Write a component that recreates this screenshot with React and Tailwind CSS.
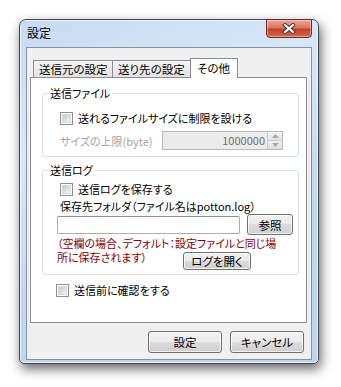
const jp = "font-['Noto_Sans_CJK_JP','Noto_Sans',sans-serif] [font-feature-settings:'palt']";

function CheckBox() {
    return (
        <span className="block w-[13px] h-[13px] shrink-0 border border-[#8e8f8f] bg-white p-px">
            <span className="block w-full h-full border border-[#d8d8d8] bg-gradient-to-br from-[#c4c8ce] to-[#f7f7f7]" />
        </span>
    );
}

function Button({ children, className = "" }) {
    return (
        <button
            className={`flex items-center justify-center border border-[#707070] rounded-[3px] bg-[linear-gradient(#f2f2f2_0%,#ebebeb_50%,#dddddd_50%,#cfcfcf_100%)] shadow-[inset_0_0_0_1px_rgba(255,255,255,0.7)] text-[11.5px] leading-[14px] text-black ${className}`}
        >
            {children}
        </button>
    );
}

function CloseButton() {
    return (
        <div className="w-[46px] h-[19px] mr-[6px] -mt-px flex items-center justify-center rounded-b-[4px] border border-[#6b2a22] bg-[linear-gradient(#e9a99a_0%,#d9755f_45%,#c2402a_55%,#cf6a4c_100%)] shadow-[inset_0_0_0_1px_rgba(255,220,210,0.5)]">
            <svg width="14" height="11" viewBox="0 0 14 11">
                <path d="M3 2 L11 9 M11 2 L3 9" stroke="#3b3b3b" strokeWidth="4" strokeLinecap="square" />
                <path d="M3 2 L11 9 M11 2 L3 9" stroke="#ffffff" strokeWidth="2" strokeLinecap="square" />
            </svg>
        </div>
    );
}

function Spinner() {
    return (
        <div className="flex flex-col w-[15px] h-full border-l border-[#c9c9c9]">
            <div className="flex-1 flex items-center justify-center border-b border-[#c9c9c9] bg-gradient-to-b from-[#f4f4f4] to-[#e2e2e2]">
                <svg width="7" height="4" viewBox="0 0 7 4"><path d="M0 4 L3.5 0 L7 4 Z" fill="#a8a8a8" /></svg>
            </div>
            <div className="flex-1 flex items-center justify-center bg-gradient-to-b from-[#f0f0f0] to-[#dedede]">
                <svg width="7" height="4" viewBox="0 0 7 4"><path d="M0 0 L3.5 4 L7 0 Z" fill="#a8a8a8" /></svg>
            </div>
        </div>
    );
}

export default function App() {
    return (
        <div className={`w-[341px] h-[387px] bg-white pt-[19px] pl-[19px] ${jp}`}>
            <div className="w-[300px] h-[345px] flex flex-col border border-[#3e4852] rounded-t-[7px] rounded-b-[5px] bg-[linear-gradient(160deg,#c6dbf2_0%,#d9e8f8_30%,#c3d9f1_60%,#bcd4ee_100%)] shadow-[2px_5px_12px_rgba(0,0,0,0.6),inset_0_0_0_1px_rgba(255,255,255,0.65)]">
                {/* title bar */}
                <div className="h-[27px] flex justify-between items-start">
                    <span className="pl-[7px] pt-[6px] text-[12px] leading-[14px] text-black">設定</span>
                    <CloseButton />
                </div>

                {/* client area */}
                <div className="mx-[6px] h-[313px] border border-[#8092a4] bg-[#f0f0f0] flex flex-col">
                    <div className="pt-[10px] pl-[3px] pr-[4px]">
                        <div className="h-[19px] flex items-end pl-[3px] text-[11.5px] leading-[14px] text-black">
                            <div className="w-[80px] h-[17px] border border-b-0 border-[#898c95] bg-gradient-to-b from-[#f3f3f3] to-[#e3e3e3] pl-[5px] pt-[1px] whitespace-nowrap">送信元の設定</div>
                            <div className="w-[80px] h-[17px] -ml-px border border-b-0 border-[#898c95] bg-gradient-to-b from-[#f3f3f3] to-[#e3e3e3] pl-[5px] pt-[1px] whitespace-nowrap">送り先の設定</div>
                            <div className="relative z-10 w-[48px] h-[20px] -ml-[2px] -mb-px border border-b-0 border-[#898c95] bg-white pl-[6px] pt-[2px] whitespace-nowrap">その他</div>
                        </div>

                        <div className="h-[246px] border border-[#898c95] bg-white text-[11px] leading-[14px] text-black">
                            {/* 送信ファイル */}
                            <fieldset className="mt-[8px] ml-[11px] w-[257px] border border-[#d5dfe5] rounded-[3px] pb-[6px]">
                                <legend className="ml-[5px] px-[2px]">送信ファイル</legend>
                                <div className="pl-[17px]">
                                    <label className="mt-[11px] h-[14px] flex items-center gap-[5px] whitespace-nowrap">
                                        <CheckBox />
                                        送れるファイルサイズに制限を設ける
                                    </label>
                                    <div className="mt-[6px] h-[19px] flex items-center">
                                        <span className="w-[102px] text-[#a3a3a3] whitespace-nowrap">サイズの上限(byte)</span>
                                        <div className="w-[121px] h-[19px] flex border border-[#b7babc] bg-[#ececec]">
                                            <span className="flex-1 text-right pr-[2px] text-[#6d6d6d] leading-[17px]">1000000</span>
                                            <Spinner />
                                        </div>
                                    </div>
                                </div>
                            </fieldset>

                            {/* 送信ログ */}
                            <fieldset className="mt-[6px] ml-[11px] w-[257px] border border-[#d5dfe5] rounded-[3px] pb-[4px]">
                                <legend className="ml-[5px] px-[2px]">送信ログ</legend>
                                <div className="pl-[17px]">
                                    <label className="mt-[5px] h-[14px] flex items-center gap-[5px] whitespace-nowrap">
                                        <CheckBox />
                                        送信ログを保存する
                                    </label>
                                    <div className="mt-[3px] h-[14px] whitespace-nowrap">保存先フォルダ（ファイル名はpotton.log）</div>
                                    <div className="mt-[1px] h-[21px] flex items-center -ml-[3px]">
                                        <div className="w-[183px] h-[18px] border border-[#abadb3] border-t-[#8e9199] rounded-[2px] bg-white" />
                                        <Button className="ml-[7px] w-[46px] h-[21px]">参照</Button>
                                    </div>
                                    <div className="mt-[1px] -ml-[3px] text-[#8b0000] leading-[14px] whitespace-nowrap">（空欄の場合、デフォルト：設定ファイルと同じ場</div>
                                    <div className="flex items-start -ml-[3px]">
                                        <span className="text-[#8b0000] leading-[14px] whitespace-nowrap">所に保存されます）</span>
                                        <Button className="ml-auto mr-[47px] mt-[2px] w-[68px] h-[18px]">ログを開く</Button>
                                    </div>
                                </div>
                            </fieldset>

                            <label className="mt-[8px] pl-[25px] h-[14px] flex items-center gap-[5px] whitespace-nowrap">
                                <CheckBox />
                                送信前に確認をする
                            </label>
                        </div>
                    </div>

                    <div className="mt-[8px] pr-[7px] flex justify-end gap-[8px]">
                        <Button className="w-[74px] h-[22px]">設定</Button>
                        <Button className="w-[74px] h-[22px]">キャンセル</Button>
                    </div>
                </div>
            </div>
        </div>
    );
}
